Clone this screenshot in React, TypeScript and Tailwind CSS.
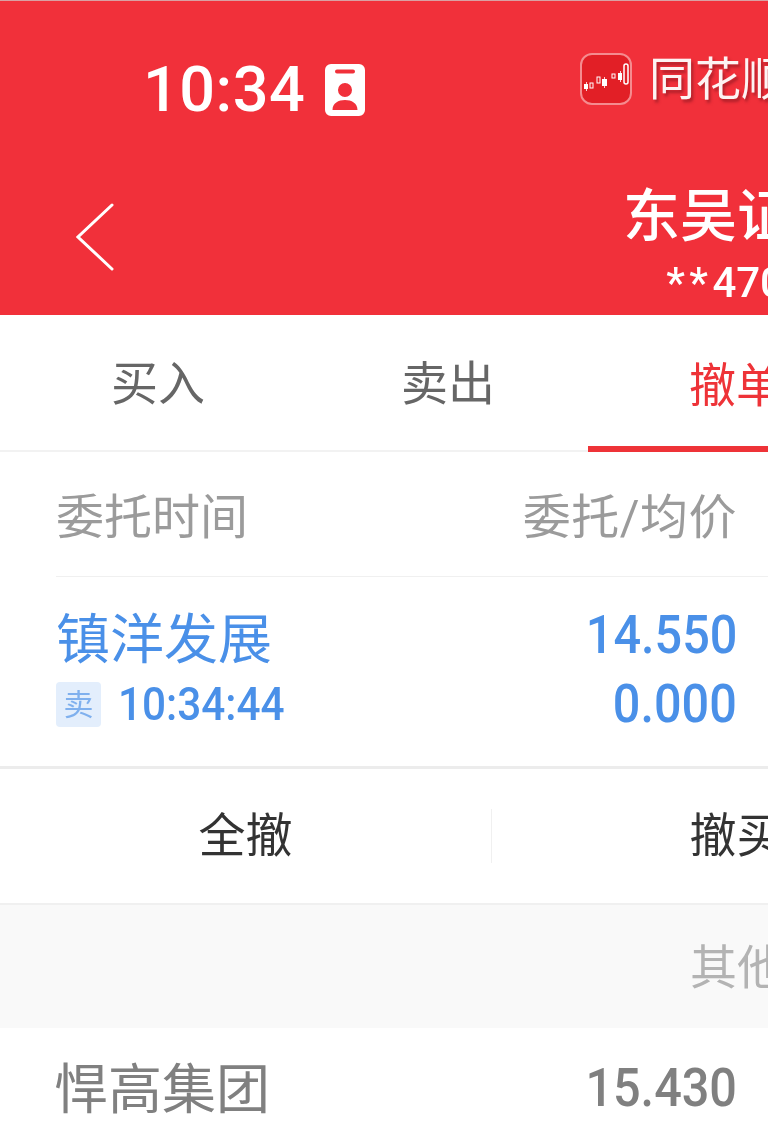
const sans = "font-['Roboto','Noto_Sans_CJK_SC',sans-serif]";

function BackChevron() {
  return (
    <svg width="40" height="70" viewBox="0 0 40 70" fill="none" className="shrink-0">
      <path d="M36 3 L2 35 L36 67" stroke="#fff" strokeWidth="3" strokeLinecap="round" strokeLinejoin="miter" />
    </svg>
  );
}

function BadgeIcon() {
  return (
    <svg width="40" height="52" viewBox="0 0 40 52">
      <path
        fillRule="evenodd"
        fill="#fff"
        d="M6 0H34a6 6 0 0 1 6 6V46a6 6 0 0 1-6 6H6a6 6 0 0 1-6-6V6A6 6 0 0 1 6 0ZM12 5.500h16a1.500 1.500 0 0 1 0 4H12a1.500 1.500 0 0 1 0-4ZM20 19a6.500 6.500 0 1 0 0 14 6.500 6.500 0 1 0 0-14ZM7.500 46c0-7 6-10 12.500-10s12.500 3 12.500 10Z"
      />
    </svg>
  );
}

function AppLogo() {
  return (
    <svg width="52" height="52" viewBox="0 0 52 52" className="shrink-0">
      <rect x="1" y="1" width="50" height="50" rx="11" fill="#e21f26" stroke="#f58b8f" strokeWidth="2" />
      <g fill="#fff">
        <rect x="4" y="31" width="4" height="5" />
        <rect x="22" y="26" width="5" height="7" />
        <rect x="38" y="20" width="4" height="7" />
        <rect x="6" y="29" width="0.800" height="9" />
        <rect x="24" y="24" width="0.800" height="11" />
        <rect x="40" y="18" width="0.800" height="11" />
      </g>
      <g fill="none" stroke="#fff" strokeWidth="1">
        <rect x="10" y="30" width="3" height="5" />
        <rect x="17" y="24" width="3" height="6" />
        <rect x="32" y="21" width="3" height="4" />
        <rect x="44" y="11" width="4" height="20" rx="2" strokeWidth="1.500" />
      </g>
    </svg>
  );
}

export default function App() {
  return (
    <div className={`h-[1128px] w-[768px] overflow-hidden bg-white ${sans} blur-[0.6px]`}>
      <div className="w-[1474px]">
        <header className="flex h-[315px] flex-col border-t border-t-[#d9a0a3] bg-[#f1303a] text-white">
          <div className="flex h-[179px] items-start">
            <div className="flex w-[580px] items-center pl-[143px] pt-[58px]">
              <span className="text-[63px] leading-[62px] font-medium tracking-[0.5px]">10:34</span>
              <span className="ml-[20px] flex"><BadgeIcon /></span>
            </div>
            <div className="flex items-center gap-[17px] pt-[52px]">
              <AppLogo />
              <span className="text-[46px] leading-[52px] text-[#fdf3f3] [text-shadow:2px_3px_3px_rgba(120,20,30,0.55)]">同花顺</span>
            </div>
          </div>
          <div className="flex items-start pl-[76px]">
            <div className="pt-[22px]"><BackChevron /></div>
            <div className="ml-[-116px] flex flex-1 flex-col items-center pt-[5px]">
              <span className="text-[57px] leading-[64px] font-medium">东吴证券</span>
              <span className="mt-[12px] text-[42px] leading-[44px] font-medium">
                <span className="tracking-[4.5px]">**</span>4708
              </span>
            </div>
          </div>
        </header>

        <nav className="flex h-[137px] border-b-[2px] border-b-[#f2f2f2] pl-[13px] text-[47px] text-[#666666]">
          <div className="flex w-[290px] items-center justify-center pt-[4px]">买入</div>
          <div className="flex w-[290px] items-center justify-center pt-[4px]">卖出</div>
          <div className="mb-[-2px] flex w-[296px] -translate-x-[5px] items-center justify-center border-b-[6px] border-b-[#ee3338] pt-[12px] text-[#ee3338]">撤单</div>
          <div className="flex w-[284px] items-center justify-center pt-[4px]">持仓</div>
          <div className="flex w-[290px] items-center justify-center pt-[4px]">查询</div>
        </nav>

        <div className="ml-[56px] flex h-[125px] w-[1418px] items-center justify-between border-b border-b-[#f0f0f0] pt-[8px] text-[48px] text-[#9b9b9b]">
          <span className="w-[300px]">委托时间</span>
          <span className="mr-[737px] tracking-[0.5px]">委托/均价</span>
        </div>

        <div className="flex h-[192px] items-start border-b-[3px] border-b-[#ececec] pl-[56px] text-[#4a90e8]">
          <div className="w-[400px] pt-[31px]">
            <div className="text-[54px] leading-[66px]">镇洋发展</div>
            <div className="mt-[8px] flex items-center gap-[17px]">
              <span className="flex h-[45px] w-[45px] items-center justify-center rounded-[4px] bg-[#e3eefc] text-[30px] text-[#7fb0ee]">卖</span>
              <span className="origin-left scale-x-[0.92] text-[46px] leading-[45px] font-medium">10:34:44</span>
            </div>
          </div>
          <div className="flex w-[281px] flex-col items-end pt-[28px] text-[54px] font-medium">
            <div className="origin-right scale-x-[0.9] leading-[60px]">14.550</div>
            <div className="mt-[9px] origin-right scale-x-[0.9] leading-[60px]">0.000</div>
          </div>
        </div>

        <div className="flex h-[136px] items-center border-b-[2px] border-b-[#f0f0f0] text-[47px] text-[#333333]">
          <div className="flex w-[491px] justify-center">全撤</div>
          <div className="flex h-[54px] w-[491px] items-center justify-center border-x border-x-[#f0f0f0]">撤买</div>
          <div className="flex w-[491px] justify-center">撤卖</div>
        </div>

        <div className="flex h-[123px] items-center justify-center bg-[#f9f9f9] pt-[4px] text-[47px] text-[#b3b3b3]">其他</div>

        <div className="flex items-start pl-[54px] text-[#808080]">
          <div className="w-[402px] pt-[28px] text-[54px] leading-[70px]">悍高集团</div>
          <div className="w-[281px] pt-[25px] text-right">
            <div className="origin-right scale-x-[0.9] text-[54px] leading-[70px] font-medium">15.430</div>
          </div>
        </div>
      </div>
    </div>
  );
}
